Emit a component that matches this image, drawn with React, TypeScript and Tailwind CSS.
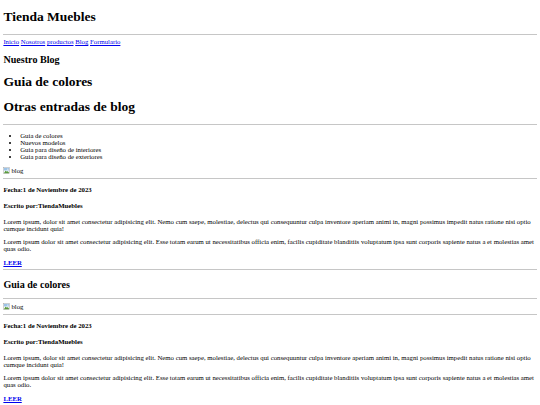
import React from "react";

const Hr = () => <hr className="my-[3.375px] border-t border-[#c6c6c6]" />;

const BrokenImg = () => (
  <span className="inline-flex items-center">
    <svg width="7" height="7" viewBox="0 0 16 16" className="mr-[1px]">
      <rect x="1.5" y="1.5" width="13" height="13" fill="#fff" stroke="#9a9a9a" />
      <path d="M2 14 L6 8 L9 11 L11 9 L14 13 V14 Z" fill="#5b9a3f" />
      <rect x="2" y="2" width="12" height="6" fill="#9cc3e8" />
      <circle cx="11" cy="5" r="1.5" fill="#f4f4f4" />
    </svg>
    blog
  </span>
);

const Post: React.FC<{ title?: string }> = ({ title }) => (
  <article>
    {title && (
      <>
        <h2 className="my-[8.4px] text-[10.125px] font-bold">{title}</h2>
        <Hr />
      </>
    )}
    <div>
      <BrokenImg />
    </div>
    <Hr />
    <h4 className="mt-[6.75px] mb-[8.98px] font-bold">Fecha:1 de Noviembre de 2023</h4>
    <h4 className="my-[8.98px] font-bold">Escrito por:TiendaMuebles</h4>
    <p className="my-[6.75px]">
      Lorem ipsum, dolor sit amet consectetur adipisicing elit. Nemo cum saepe, molestiae, delectus qui consequuntur culpa
      inventore aperiam animi in, magni possimus impedit natus ratione nisi optio cumque incidunt quia!
    </p>
    <p className="my-[6.75px]">
      Lorem ipsum dolor sit amet consectetur adipisicing elit. Esse totam earum ut necessitatibus officia enim, facilis cupiditate
      blanditiis voluptatum ipsa sunt corporis sapiente natus a et molestias amet quas odio.
    </p>
    <div>
      <a href="#" className="font-bold text-[#0000ee] underline">
        LEER
      </a>
    </div>
    <Hr />
  </article>
);

export default function App() {
  return (
    <div className="m-[3.375px] bg-white font-['Liberation_Serif','Times_New_Roman',serif] text-[6.75px] leading-[normal] text-black">
      <header>
        <h1 className="my-[9.05px] text-[13.5px] font-bold">Tienda Muebles</h1>
        <Hr />
        <nav className="text-[#0000ee]">
          <a href="#" className="underline">Inicio</a> <a href="#" className="underline">Nosotros</a>{" "}
          <a href="#" className="underline">productos</a> <a href="#" className="underline">Blog</a>{" "}
          <a href="#" className="underline">Formulario</a>
        </nav>
      </header>
      <main>
        <h2 className="my-[8.4px] text-[10.125px] font-bold">Nuestro Blog</h2>
        <h1 className="my-[9.05px] text-[13.5px] font-bold">Guia de colores</h1>
        <h1 className="my-[9.05px] text-[13.5px] font-bold">Otras entradas de blog</h1>
        <Hr />
        <ul className="my-[6.75px] list-disc pl-[16.875px]">
          <li>Guia de colores</li>
          <li>Nuevos modelos</li>
          <li>Guia para diseño de interiores</li>
          <li>Guia para diseño de exteriores</li>
        </ul>
        <Post />
        <Post title="Guia de colores" />
      </main>
    </div>
  );
}
